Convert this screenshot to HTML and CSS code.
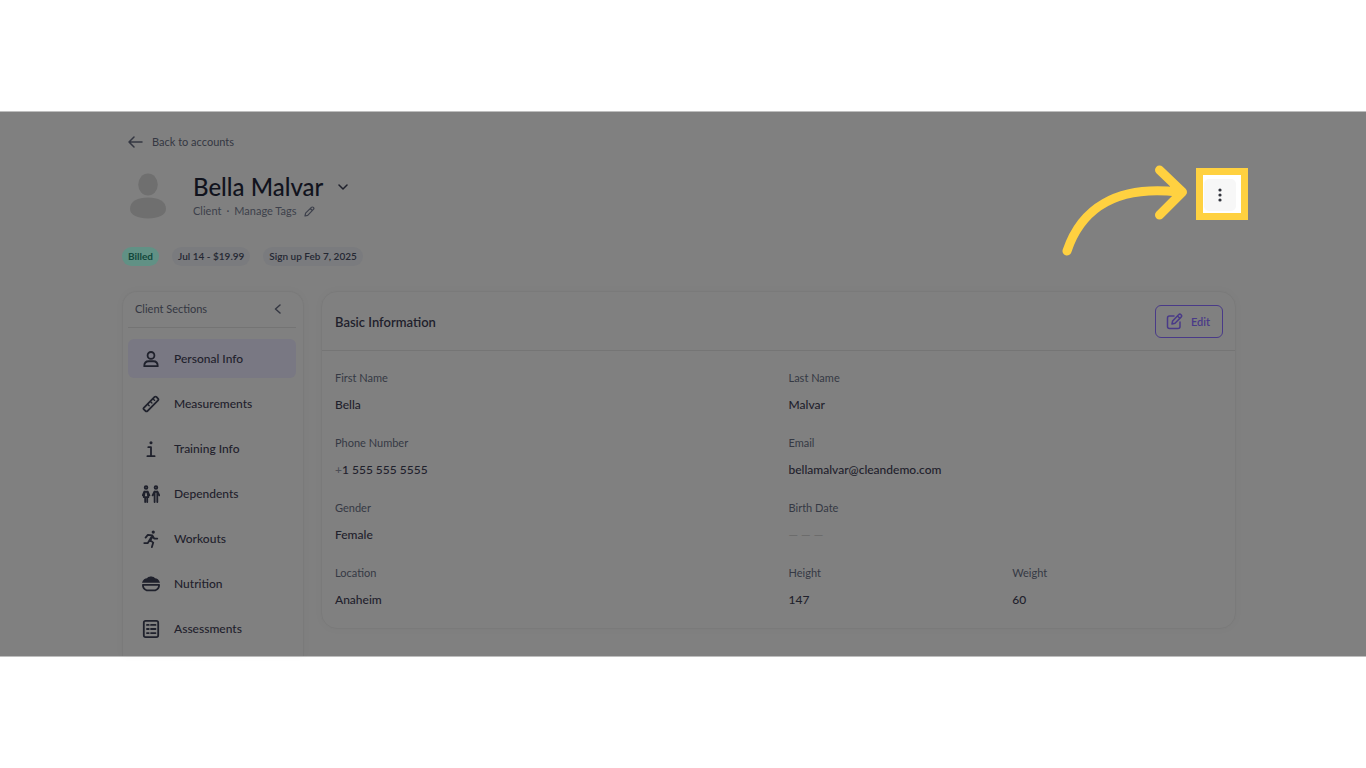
FILE: index.html
```
<!DOCTYPE html>
<html lang="en">
<head>
  <meta charset="UTF-8">
  <meta name="viewport" content="width=device-width, initial-scale=1">
  <title>Bella Malvar - Client</title>
  <link rel="stylesheet" href="styles.css">
</head>
<body>
  <div class="stage">
    <a class="back" href="#">
      <svg width="15" height="12" viewBox="0 0 15 12"><path d="M14 6H1M6 1L1 6l5 5"/></svg>
      Back to accounts
    </a>

    <header class="profile">
      <svg class="avatar" width="38" height="46" viewBox="0 0 38 46">
        <ellipse cx="19" cy="11.500" rx="9.800" ry="11"/>
        <path d="M1 36C1 28 9 24.500 19 24.500S37 28 37 36c0 6-8 9.500-18 9.500S1 42 1 36z"/>
      </svg>
      <div class="who">
        <div class="name-row">
          <h1>Bella Malvar</h1>
          <button class="plain" aria-label="Switch client">
            <svg width="10" height="7" viewBox="0 0 10 7"><path d="M1 1l4 4 4-4"/></svg>
          </button>
        </div>
        <div class="meta">
          <span>Client</span>
          <span>·</span>
          <button class="plain tags-btn">
            Manage Tags
            <svg width="11" height="11" viewBox="0 0 11 11"><path d="M1 10l.6-2.800L7.400 1.400a1.200 1.200 0 0 1 2 2L3.700 9.300zM6.300 2.500l2 2"/></svg>
          </button>
        </div>
      </div>
      <div class="spotlight">
        <button class="more-btn" aria-label="More options">
          <svg width="4" height="14" viewBox="0 0 4 14"><circle cx="2" cy="2" r="1.600"/><circle cx="2" cy="7" r="1.600"/><circle cx="2" cy="12" r="1.600"/></svg>
        </button>
        <svg class="pointer" width="130" height="96" viewBox="0 0 130 96"><path d="M7 87C21 45 56 21 118 28M99.500 6l23 22-23 23"/></svg>
      </div>
    </header>

    <div class="pills">
      <span class="pill billed">Billed</span>
      <span class="pill">Jul 14 - $19.99</span>
      <span class="pill">Sign up Feb 7, 2025</span>
    </div>

    <div class="columns">
      <nav class="sections">
        <div class="sections-head">
          Client Sections
          <button class="plain" aria-label="Collapse">
            <svg width="7" height="10" viewBox="0 0 7 10"><path d="M6 1L1.500 5 6 9"/></svg>
          </button>
        </div>
        <ul>
          <li><a class="active" href="#">
            <svg viewBox="0 0 20 20"><circle cx="10" cy="6" r="3.800"/><path d="M2.500 18c0-4 2.500-5.500 5-5.500h5c2.500 0 5 1.500 5 5.500z"/></svg>
            Personal Info</a></li>
          <li><a href="#">
            <svg viewBox="0 0 20 20"><path d="M2 14.200L14 2.200q1-1 2 0L17.800 4q1 1 0 2L6 17.800q-1 1-2 0L2 16q-.8-.9 0-1.800z"/><path class="thin" d="M6.500 10.500L8 12M9.500 7.500L11 9M12.500 4.500L14 6"/></svg>
            Measurements</a></li>
          <li><a href="#">
            <svg viewBox="0 0 20 20"><path d="M7 8h3v10M6 18h8"/><circle class="fill" cx="10" cy="3" r="1.700"/></svg>
            Training Info</a></li>
          <li><a href="#">
            <svg viewBox="0 0 20 20"><circle cx="4.500" cy="2.800" r="1.500"/><circle cx="15.500" cy="2.800" r="1.500"/><path d="M2.500 7.500h4M2.500 7.500L.8 11.500M6.500 7.500l1.700 4M3 8l-1 5.500h5L6 8M3.500 14v5M5.800 14v5M13.800 7.500h3.400M13.800 7.500l-2 4M17.200 7.500l2 4M14 8v11M17 8v11"/></svg>
            Dependents</a></li>
          <li><a href="#">
            <svg viewBox="0 0 20 20"><circle class="fill" cx="12.500" cy="2.300" r="1.800"/><path d="M4 8.500l2.500-3 5 .5L8.500 11l4 3L11 19M8.500 11L6.500 14.500H2.500M11.500 6l2 3.500H17M12 7l-2.500 4"/></svg>
            Workouts</a></li>
          <li><a href="#">
            <svg viewBox="0 0 20 20"><path class="fill" d="M0 8.500C1 5 3.500 3.500 5.500 3.500 7 1.500 8.500 2.500 10 1.500c1.500 1 3 0 4.500 2 2 0 4.500 1.500 5.500 5z"/><path d="M1 11h18c0 3-2 5-4 6H5c-2-1-4-3-4-6z"/></svg>
            Nutrition</a></li>
          <li><a href="#">
            <svg viewBox="0 0 20 20"><rect x="2" y="1" width="16" height="18" rx="2"/><path d="M5.500 5.500h2M10 5.500h5M5.500 10h2M10 10h5M5.500 14.500h2M10 14.500h5"/></svg>
            Assessments</a></li>
        </ul>
      </nav>

      <section class="card">
        <div class="card-head">
          <h2>Basic Information</h2>
          <button class="edit-btn">
            <svg width="17" height="17" viewBox="0 0 17 17"><path d="M8 3H3.500Q1.500 3 1.500 5v8.500q0 2 2 2H12q2 0 2-2V9M6 11l.6-3 6-6.200a1.500 1.500 0 0 1 2.500 2.300L9 10.300zM11.500 3l2.300 2.200"/></svg>
            Edit
          </button>
        </div>
        <dl class="fields">
          <div><dt>First Name</dt><dd>Bella</dd></div>
          <div><dt>Last Name</dt><dd>Malvar</dd></div>
          <div><dt>Phone Number</dt><dd><span class="plus">+</span>1 555 555 5555</dd></div>
          <div><dt>Email</dt><dd>bellamalvar@cleandemo.com</dd></div>
          <div><dt>Gender</dt><dd>Female</dd></div>
          <div><dt>Birth Date</dt><dd class="empty">— — —</dd></div>
          <div><dt>Location</dt><dd>Anaheim</dd></div>
          <div class="pair">
            <div><dt>Height</dt><dd>147</dd></div>
            <div><dt>Weight</dt><dd>60</dd></div>
          </div>
        </dl>
      </section>
    </div>
  </div>
</body>
</html>
```
FILE: styles.css
```
* {
  box-sizing: border-box;
}

body {
  margin: 0;
  min-height: 100vh;
  display: flex;
  flex-direction: column;
  justify-content: center;
  background: #ffffff;
  font-family: Lato, "Liberation Sans", sans-serif;
  font-size: 11px;
  line-height: 16px;
  color: #1f212c;
}

h1, h2, ul, dl, dd {
  margin: 0;
  padding: 0;
}

ul {
  list-style: none;
}

a {
  color: inherit;
  text-decoration: none;
}

button {
  font: inherit;
  color: inherit;
  cursor: pointer;
}

svg {
  display: block;
  flex: none;
  fill: none;
  stroke: currentColor;
  stroke-width: 1.5;
  stroke-linecap: round;
  stroke-linejoin: round;
}

.plain {
  border: none;
  background: none;
  padding: 0;
}

.stage {
  background: #808080;
  border-top: 1px solid #bebebe;
  border-bottom: 1px solid #bebebe;
  padding: 22px 130px 0 122px;
}

.back {
  display: inline-flex;
  align-items: center;
  gap: 9px;
  padding-left: 6px;
  color: #343742;
  vertical-align: top;
}

.profile {
  display: flex;
  align-items: center;
  margin-top: 18px;
  padding-left: 7px;
}

.avatar {
  fill: #6f6f6f;
  stroke: none;
  margin: 3px 26px 0 0;
}

.who {
  flex: 1;
  padding-top: 2px;
}

.name-row {
  display: flex;
  align-items: center;
  gap: 15px;
}

h1 {
  font-size: 24px;
  line-height: 32px;
  font-weight: 500;
  color: #11131d;
}

.meta {
  display: flex;
  gap: 5px;
  color: #3d404b;
}

.tags-btn {
  display: flex;
  align-items: center;
  gap: 7px;
}

.tags-btn svg {
  stroke-width: 1.2;
}

/* highlighted control, hangs over the right edge of the page */
.spotlight {
  position: relative;
  width: 52px;
  height: 52px;
  margin-right: -12px;
  padding: 4px 1px;
  border: 7px solid #ffd140;
  background: #ffffff;
}

.more-btn {
  display: flex;
  align-items: center;
  justify-content: center;
  width: 32px;
  height: 32px;
  padding: 0;
  border: none;
  border-radius: 5px;
  background: #f7f7f7;
}

.more-btn svg {
  fill: #33353d;
  stroke: none;
}

.pointer {
  position: absolute;
  top: -11px;
  right: 51px;
  color: #ffd140;
  stroke-width: 9;
}

.pills {
  display: flex;
  gap: 13px;
  margin-top: 27px;
}

.pill {
  padding: 1px 6px 2px;
  border-radius: 10px;
  background: #7a7b7e;
  color: #252833;
  font-size: 10px;
  font-weight: 600;
}

.pill.billed {
  background: #619185;
  color: #12483b;
  font-weight: 700;
}

.columns {
  display: flex;
  gap: 17px;
  margin-top: 25px;
}

.sections {
  width: 182px;
  padding: 0 7px 8px 5px;
  border: 1px solid #7a7a7a;
  border-bottom: none;
  border-radius: 15px 15px 0 0;
  box-shadow: 0 0 8px rgba(0, 0, 0, 0.03);
}

.sections-head {
  display: flex;
  align-items: center;
  justify-content: space-between;
  height: 36px;
  padding: 0 15px 1px 7px;
  border-bottom: 1px solid #747474;
  color: #343742;
}

.sections ul {
  display: grid;
  gap: 6px;
  padding-top: 11px;
}

.sections li a {
  display: flex;
  align-items: center;
  gap: 14px;
  height: 39px;
  padding-left: 14px;
  border-radius: 6px;
  font-size: 12px;
  font-weight: 500;
}

.sections li svg {
  width: 18px;
  height: 18px;
  stroke-width: 2;
}

.sections .thin {
  stroke-width: 1.5;
}

.sections .active {
  background: #797883;
}

.fill {
  fill: currentColor;
  stroke: none;
}

.card {
  flex: 1;
  align-self: flex-start;
  border: 1px solid #7a7a7a;
  border-radius: 16px;
  box-shadow: 0 0 8px rgba(0, 0, 0, 0.03);
}

.card-head {
  display: flex;
  align-items: center;
  justify-content: space-between;
  padding: 13px 12px 12px 13px;
  border-bottom: 1px solid #757575;
}

h2 {
  font-size: 13px;
  font-weight: 600;
}

.edit-btn {
  display: flex;
  align-items: center;
  gap: 8px;
  height: 33px;
  padding: 0 12px 0 10px;
  border: 1px solid #493a88;
  border-radius: 6px;
  background: none;
  color: #493a88;
  font-weight: 600;
}

.fields {
  display: grid;
  grid-template-columns: 1fr 1fr;
  gap: 21px 20px;
  padding: 19px 13px;
}

.pair {
  display: grid;
  grid-template-columns: 1fr 1fr;
  gap: 14px;
}

dt {
  margin-bottom: 11px;
  line-height: 15px;
  color: #353944;
}

dd {
  font-size: 12px;
  line-height: 18px;
  font-weight: 500;
}

.plus {
  color: #4d4f57;
}

.empty {
  color: #6c6c6c;
}
```
